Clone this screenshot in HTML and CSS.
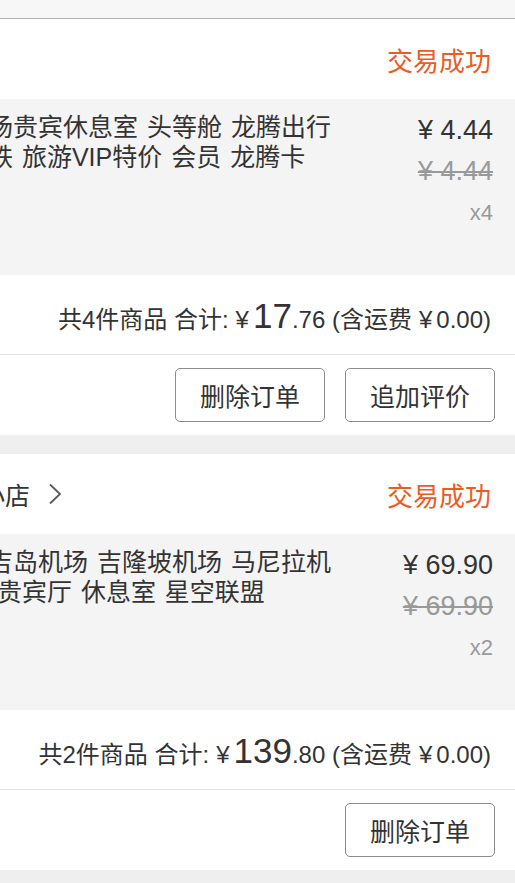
FILE: index.html
```html
<!DOCTYPE html>
<html lang="zh-CN">
<head>
<meta charset="utf-8">
<title>订单列表</title>
<link rel="stylesheet" href="styles.css">
</head>
<body>
<div class="page">
  <div class="topbar"></div>

  <section class="order">
    <div class="order-head">
      <div class="shop"></div>
      <div class="status">交易成功</div>
    </div>
    <div class="item">
      <div class="title">
        <span class="ln">机场贵宾休息室 头等舱 龙腾出行</span>
        <span class="ln">高铁 旅游VIP特价 会员 龙腾卡</span>
      </div>
      <div class="prices">
        <div class="price">¥ 4.44</div>
        <div class="orig">¥ 4.44</div>
        <div class="qty">x4</div>
      </div>
    </div>
    <div class="summary">共4件商品 合计:<span class="yen">¥</span><span class="big">17</span>.76 (含运费<span class="yen">¥</span>0.00)</div>
    <div class="actions">
      <button class="btn">删除订单</button>
      <button class="btn">追加评价</button>
    </div>
  </section>

  <section class="order">
    <div class="order-head">
      <div class="shop">
        <span class="shop-name">旅行小店</span>
        <svg class="chev" width="14" height="22" viewBox="0 0 14 22"><polyline points="2,1.5 12,11 2,20.5" fill="none" stroke="#5a5a5a" stroke-width="1.8"/></svg>
      </div>
      <div class="status">交易成功</div>
    </div>
    <div class="item">
      <div class="title">
        <span class="ln">普吉岛机场 吉隆坡机场 马尼拉机</span>
        <span class="ln">场 贵宾厅 休息室 星空联盟</span>
      </div>
      <div class="prices">
        <div class="price">¥ 69.90</div>
        <div class="orig">¥ 69.90</div>
        <div class="qty">x2</div>
      </div>
    </div>
    <div class="summary">共2件商品 合计:<span class="yen">¥</span><span class="big">139</span>.80 (含运费<span class="yen">¥</span>0.00)</div>
    <div class="actions">
      <button class="btn">删除订单</button>
    </div>
  </section>
</div>
</body>
</html>
```

FILE: styles.css
```css
html, body {
  margin: 0;
  padding: 0;
  background: #efefef;
}

body {
  font-family: "Liberation Sans", "Noto Sans CJK SC", sans-serif;
  color: #333;
  overflow: hidden;
}

.page {
  width: 515px;
  overflow: hidden;
}

.topbar {
  height: 18px;
  background: #f7f7f7;
  border-bottom: 1px solid #b3b3b3;
}

.order {
  background: #fff;
  margin-bottom: 19px;
}

.order-head {
  height: 80px;
  display: flex;
  align-items: center;
  justify-content: space-between;
  padding-right: 24px;
}

.shop {
  display: flex;
  align-items: center;
  white-space: nowrap;
}

.shop-name {
  font-size: 25px;
  color: #333;
  margin-left: -70px;
}

.chev {
  margin-left: 18px;
}

.status {
  font-size: 26px;
  color: #ec5b1f;
}

.item {
  height: 176px;
  box-sizing: border-box;
  background: #f4f4f4;
  display: flex;
  justify-content: space-between;
  padding: 11px 22px 0 0;
}

.title {
  display: flex;
  flex-direction: column;
  margin: 2px 0 0 -37px;
  font-size: 25px;
  line-height: 30px;
  word-spacing: 2px;
  color: #333;
  white-space: nowrap;
}

.prices {
  text-align: right;
  white-space: nowrap;
}

.price,
.orig,
.qty {
  height: 41px;
  line-height: 41px;
}

.price {
  font-size: 27px;
  color: #333;
}

.orig {
  font-size: 27px;
  color: #999;
  text-decoration: line-through;
}

.qty {
  font-size: 22px;
  color: #999;
}

.summary {
  height: 80px;
  box-sizing: border-box;
  display: flex;
  align-items: baseline;
  justify-content: flex-end;
  padding: 21px 24px 0 0;
  font-size: 24px;
  color: #333;
  border-bottom: 1px solid #e6e6e6;
  white-space: pre;
}

.summary .yen {
  margin: 0 4px 0 7px;
}

.summary .big {
  font-size: 35px;
}

.actions {
  height: 80px;
  display: flex;
  align-items: center;
  justify-content: flex-end;
  gap: 20px;
  padding-right: 20px;
}

.btn {
  width: 150px;
  height: 54px;
  box-sizing: border-box;
  border: 1px solid #8c8c8c;
  border-radius: 5px;
  background: #fff;
  font-family: "Liberation Sans", "Noto Sans CJK SC", sans-serif;
  font-size: 25px;
  color: #333;
  padding: 0;
}
```
